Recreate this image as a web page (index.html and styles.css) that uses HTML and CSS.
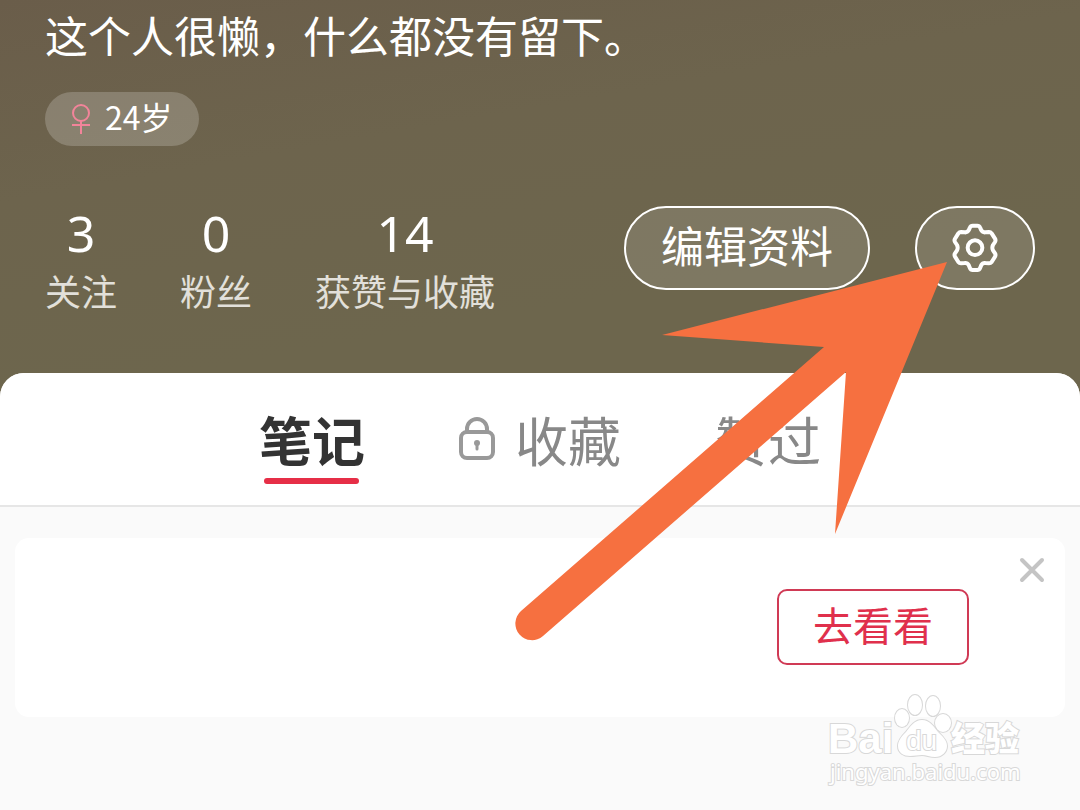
FILE: index.html
```html
<!DOCTYPE html>
<html lang="zh-CN">
<head>
    <meta charset="UTF-8">
    <meta name="viewport" content="width=device-width, initial-scale=1">
    <title>个人主页</title>
    <link rel="stylesheet" href="styles.css">
</head>
<body>

    <header class="profile">
        <p class="bio">这个人很懒，什么都没有留下。</p>
        <div class="badge">
            <svg class="badge-icon" viewBox="0 0 20 32" fill="none" stroke="#f2849a" stroke-width="2">
                <circle cx="10" cy="10" r="8"/>
                <path d="M10 18V31M1 22H19"/>
            </svg>
            <span>24岁</span>
        </div>
        <div class="profile-row">
            <a class="stat" href="#"><strong>3</strong><span>关注</span></a>
            <a class="stat" href="#"><strong>0</strong><span>粉丝</span></a>
            <a class="stat" href="#"><strong>14</strong><span>获赞与收藏</span></a>
            <div class="actions">
                <button class="pill pill-edit" type="button">编辑资料</button>
                <button class="pill pill-settings" type="button" aria-label="设置">
                    <svg class="gear" viewBox="30 37 150 156" fill="none" stroke="#fff" stroke-width="12" stroke-linejoin="round">
                        <path d="M98 48H112Q118 48 120 53L124 62Q128 69 136 68L147 67Q152 67 155 71L165 87Q168 92 165 97L159 106Q155 114 159 122L165 131Q168 136 165 141L155 157Q152 161 147 161L136 160Q128 159 124 166L120 176Q118 181 112 181H98Q92 181 90 176L86 166Q82 159 74 160L63 161Q58 161 55 157L45 141Q42 136 45 131L51 122Q55 114 51 106L45 97Q42 92 45 87L55 71Q58 67 63 67L74 68Q82 69 86 62L90 53Q92 48 98 48Z"/>
                        <circle cx="105" cy="114" r="22"/>
                    </svg>
                </button>
            </div>
        </div>
    </header>

    <main class="panel">
        <nav class="tabs">
            <button class="tab active" type="button">笔记</button>
            <button class="tab" type="button">
                <svg class="lock" viewBox="2 0 36 44" fill="none" stroke="#999" stroke-width="4">
                    <rect x="4" y="15" width="32" height="26" rx="6"/>
                    <path d="M10 15V12A10 10 0 0 1 30 12V15"/>
                    <circle cx="20" cy="26" r="3" fill="#999" stroke="none"/>
                    <path d="M20 26V32" stroke-width="3" stroke-linecap="round"/>
                </svg>
                收藏
            </button>
            <button class="tab" type="button">赞过</button>
        </nav>

        <section class="card">
            <button class="look" type="button">去看看</button>
            <button class="close" type="button" aria-label="关闭">
                <svg viewBox="0 0 26 26" stroke="#c4c4c4" stroke-width="4" stroke-linecap="round">
                    <path d="M3 3L23 23M23 3L3 23"/>
                </svg>
            </button>
        </section>
    </main>

    <!-- pointer to the settings button -->
    <svg class="arrow" viewBox="514 260 436 382">
        <path fill="#f67040" d="M947 262L662 335L824 347L521 611A16.500 16.500 0 0 0 543 636L846 372L835 534Z"/>
    </svg>

    <svg class="watermark" viewBox="820 690 210 100">
        <g class="mark-shape">
            <ellipse cx="902" cy="718" rx="7" ry="9"/>
            <ellipse cx="915" cy="705" rx="7" ry="10"/>
            <ellipse cx="933" cy="706" rx="7" ry="10"/>
            <ellipse cx="943" cy="723" rx="8" ry="9"/>
            <path d="M922 720C914 720 910 727 906 732C901 737 898 741 898 746C898 753 904 756 910 756C915 756 918 755 922 755C926 755 930 757 935 757C942 757 947 752 947 746C947 740 942 736 938 732C934 727 930 720 922 720Z"/>
        </g>
        <text class="mark-bai" x="828" y="753">Bai</text>
        <text class="mark-du" x="906" y="750">du</text>
        <text class="mark-cn" x="951" y="751">经验</text>
        <text class="mark-url" x="830" y="780">jingyan.baidu.com</text>
    </svg>

</body>
</html>
```
FILE: styles.css
```css
* {
    box-sizing: border-box;
}
body {
    position: relative;
    display: flex;
    flex-direction: column;
    min-height: 100vh;
    margin: 0;
    font-family: "Noto Sans CJK SC", sans-serif;
    color: #fff;
    background: linear-gradient(170deg, #6a5d4a 0, #6d644d 200px, #6d664d 400px);
}
button {
    padding: 0;
    border: 0;
    background: none;
    font-family: inherit;
    color: inherit;
    cursor: pointer;
}
svg {
    display: block;
}

/* profile header */
.profile {
    padding: 4px 45px 59px;
}
.bio {
    margin: 0 0 28px;
    font-size: 43px;
    line-height: 60px;
}
.badge {
    display: inline-flex;
    align-items: center;
    gap: 14px;
    height: 54px;
    padding: 0 26px;
    border-radius: 27px;
    background: rgba(255, 255, 255, 0.2);
    font-size: 32px;
    line-height: 48px;
    vertical-align: top;
}
.badge span {
    padding-bottom: 6px;
}
.badge-icon {
    width: 20px;
    height: 32px;
}
.profile-row {
    display: flex;
    align-items: flex-start;
    gap: 63px;
    margin-top: 54px;
}
.stat {
    display: flex;
    flex-direction: column;
    align-items: center;
    color: #fff;
    text-decoration: none;
}
.stat strong {
    font-family: "Noto Sans", sans-serif;
    font-size: 50px;
    font-weight: 400;
    line-height: 66px;
}
.stat span {
    font-size: 36px;
    line-height: 48px;
    color: #e2e0da;
}
.actions {
    display: flex;
    gap: 45px;
    margin-left: auto;
    padding-top: 6px;
}
.pill {
    display: flex;
    align-items: center;
    justify-content: center;
    height: 84px;
    border: 2px solid #fff;
    border-radius: 42px;
    background: rgba(255, 255, 255, 0.12);
    font-size: 43px;
    line-height: 72px;
}
.pill-edit {
    padding: 0 35px 8px;
}
.pill-settings {
    width: 120px;
}
.gear {
    width: 50px;
    height: 52px;
}

/* white sheet with tabs */
.panel {
    flex: 1;
    border-radius: 24px 24px 0 0;
    background: #fafafa;
    overflow: hidden;
}
.tabs {
    display: flex;
    justify-content: center;
    gap: 94px;
    height: 134px;
    border-bottom: 2px solid #e6e6e6;
    background: #fff;
}
.tab {
    position: relative;
    display: flex;
    align-items: center;
    gap: 20px;
    height: 132px;
    font-size: 53px;
    line-height: 76px;
    color: #888;
}
.tab.active {
    font-weight: 700;
    color: #333;
}
.tab.active::after {
    content: "";
    position: absolute;
    bottom: 21px;
    left: 5px;
    right: 6px;
    height: 6px;
    border-radius: 3px;
    background: #e62e47;
}
.lock {
    width: 36px;
    height: 44px;
}

.card {
    display: flex;
    align-items: flex-start;
    justify-content: flex-end;
    gap: 50px;
    height: 179px;
    margin: 31px 15px;
    padding: 19px 20px;
    border-radius: 14px;
    background: #fff;
}
.look {
    height: 76px;
    margin-top: 32px;
    padding: 0 34px 6px;
    border: 2px solid #d03a55;
    border-radius: 10px;
    font-size: 40px;
    line-height: 66px;
    color: #e0304c;
}
.close svg {
    width: 26px;
    height: 26px;
}

/* drawn over the page */
.arrow {
    position: absolute;
    top: 260px;
    left: 514px;
    width: 436px;
    height: 382px;
    pointer-events: none;
}
.watermark {
    position: absolute;
    right: 50px;
    bottom: 20px;
    width: 210px;
    height: 100px;
    pointer-events: none;
}
.watermark text,
.mark-shape {
    fill: #fff;
    stroke: #d8d8d8;
    stroke-width: 2px;
    paint-order: stroke;
}
.mark-bai {
    font: 700 42px "Liberation Sans", sans-serif;
}
.mark-du {
    font: 400 28px "Liberation Sans", sans-serif;
}
.mark-cn {
    font: 900 34px "Noto Sans CJK SC", sans-serif;
}
.mark-url {
    font: 400 22px "Noto Sans", sans-serif;
}
```
